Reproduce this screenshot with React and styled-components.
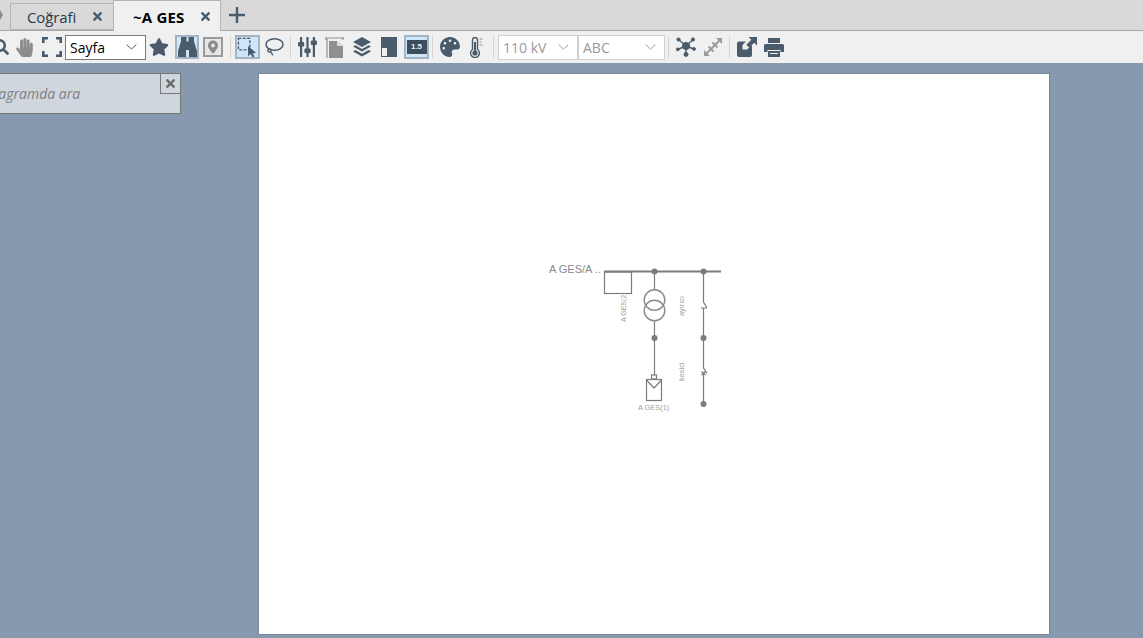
import React from "react";
import styled, { createGlobalStyle } from "styled-components";
import { FaSearch, FaHandPaper, FaStar, FaPalette, FaTimes } from "react-icons/fa";

const Global = createGlobalStyle`
  html, body { margin: 0; padding: 0; height: 100%; overflow: hidden; }
  body { font-family: "Open Sans", "Noto Sans", sans-serif; background: #8799ae; }
  #root { height: 100%; }
`;

const ICON = "#4a5c6c";
const MUTED = "#8d8d8d";

const Shell = styled.div`
  width: 1143px;
  height: 638px;
  display: flex;
  flex-direction: column;
  overflow: hidden;
`;

const TabBar = styled.div`
  box-sizing: border-box;
  height: 31px;
  background: #d9d9d9;
  border-bottom: 1px solid #a9a9a9;
  display: flex;
  align-items: flex-end;
  flex-shrink: 0;
`;

const ScrollArrow = styled.div`
  width: 0;
  height: 0;
  margin: 0 7px 10px 0;
  border-top: 5px solid transparent;
  border-bottom: 5px solid transparent;
  border-left: 3px solid #8a8a8a;
`;

const Tab = styled.div`
  box-sizing: border-box;
  display: flex;
  align-items: center;
  height: ${(p) => (p.$active ? "31px" : "27px")};
  width: ${(p) => (p.$active ? "108px" : "103px")};
  margin-bottom: ${(p) => (p.$active ? "-1px" : "0")};
  padding: ${(p) => (p.$active ? "1px 9px 0 19px" : "0 10px 0 16px")};
  background: ${(p) => (p.$active ? "#f0f0f0" : "#d9d9d9")};
  border: 1px solid #b4b4b4;
  border-bottom: ${(p) => (p.$active ? "none" : "1px solid #b4b4b4")};
  border-right: ${(p) => (p.$active ? "1px solid #b4b4b4" : "none")};
  font-size: 15px;
  font-weight: ${(p) => (p.$active ? 700 : 400)};
  letter-spacing: ${(p) => (p.$active ? "0.2px" : "-0.1px")};
  color: ${(p) => (p.$active ? "#000" : "#2b3a48")};
`;

const TabLabel = styled.span`
  flex: 1;
  white-space: nowrap;
`;

const TabClose = styled(FaTimes)`
  width: 11px;
  height: 13px;
  color: ${ICON};
`;

const AddTab = styled.svg`
  width: 16px;
  height: 16px;
  margin: 0 0 7px 8px;
  stroke: ${ICON};
  stroke-width: 2.4;
  fill: none;
`;

const Toolbar = styled.div`
  height: 32px;
  background: #f0f0f0;
  display: flex;
  align-items: center;
  flex-shrink: 0;
  margin-left: -9px;
`;

const ToolSlot = styled.div`
  box-sizing: border-box;
  width: ${(p) => p.$w || 27}px;
  height: 24px;
  display: flex;
  align-items: center;
  justify-content: center;
  flex-shrink: 0;
  color: ${(p) => (p.$muted ? MUTED : ICON)};
  background: ${(p) => (p.$on ? "#cde6f9" : "transparent")};
  border: ${(p) => (p.$on ? "2px solid #a3b5c5" : "none")};
  margin-left: ${(p) => p.$ml || 0}px;
`;

const Divider = styled.div`
  width: 1px;
  height: 22px;
  background: #d4d4d4;
  flex-shrink: 0;
  margin: 0 ${(p) => p.$r ?? 3}px 0 ${(p) => p.$l ?? 3}px;
`;

const Select = styled.div`
  box-sizing: border-box;
  width: ${(p) => p.$w}px;
  height: 25px;
  flex-shrink: 0;
  display: flex;
  align-items: center;
  justify-content: space-between;
  padding: 0 8px 0 4px;
  background: #fff;
  border: 1px solid ${(p) => (p.$disabled ? "#d0d0d0" : "#7a7a7a")};
  color: ${(p) => (p.$disabled ? "#9a9a9a" : "#000")};
  font-size: 14px;
`;

const Chevron = ({ color = "#555" }) => (
  <svg width="11" height="6" viewBox="0 0 11 6">
    <path d="M.7.7 5.5 5 10.3.7" fill="none" stroke={color} strokeWidth="1" />
  </svg>
);

const ScaleBadge = styled.div`
  width: 20px;
  height: 14px;
  background: #3c4e5e;
  color: #e8eef3;
  font: 700 8px/14px "Liberation Sans", sans-serif;
  text-align: center;
`;

const Canvas = styled.div`
  flex: 1;
  background: #8799ae;
  padding: 10px 0 0 258px;
  position: relative;
  min-height: 0;
`;

const Sheet = styled.div`
  box-sizing: border-box;
  width: 792px;
  height: 562px;
  background: #fff;
  border: 1px solid #77889a;
`;

const DiagramSvg = styled.svg`
  display: block;
  width: 790px;
  height: 560px;
`;

const SearchPanel = styled.div`
  position: absolute;
  left: -24px;
  top: 10px;
  box-sizing: border-box;
  width: 205px;
  height: 41px;
  background: #cfd6de;
  border: 1px solid #777;
  border-left: none;
  display: flex;
  align-items: center;
  padding: 0 0 0 3px;
  color: #7f7f7f;
  font-size: 14px;
  font-style: italic;
`;

const PanelClose = styled.div`
  position: absolute;
  top: 0;
  right: 0;
  box-sizing: border-box;
  width: 20px;
  height: 20px;
  border-left: 1px solid #777;
  border-bottom: 1px solid #777;
  display: flex;
  align-items: center;
  justify-content: center;
  color: #6c6c6c;
`;

const FitIcon = () => (
  <svg width="20" height="20" viewBox="0 0 20 20" fill="none" stroke="currentColor" strokeWidth="2.6">
    <path d="M1.3 6V1.3H6M14 1.3h4.7V6M18.7 14v4.7H14M6 18.7H1.3V14" />
  </svg>
);

const BinocularsIcon = () => (
  <svg width="19" height="20" viewBox="0 0 19 20" fill={ICON}>
    <path d="M3 0h5.500v4.500h2V0H16v4.500l.5 1.500 2.500 8v6h-8v-7H8v7H0v-6l2.500-8L3 4.500Z" />
  </svg>
);

const PinIcon = () => (
  <svg width="20" height="20" viewBox="0 0 20 20">
    <rect x="1" y="1" width="18" height="18" fill="#e6e6e6" stroke="#9a9a9a" strokeWidth="2" />
    <path fillRule="evenodd" fill="#8a8a8a" d="M10 3.6a5 5 0 0 0-5 5c0 3.4 5 8.200 5 8.200s5-4.800 5-8.200a5 5 0 0 0-5-5Zm0 3a2 2 0 1 1 0 4 2 2 0 0 1 0-4Z" />
  </svg>
);

const MarqueeIcon = () => (
  <svg width="21" height="21" viewBox="0 0 22 22">
    <rect x="1.500" y="1.500" width="12" height="12" fill="none" stroke={ICON} strokeWidth="1.400" strokeDasharray="3 1.600" />
    <path d="M11.500 9.500 20 16.500l-3.600.4 1.900 3.600-2 1-1.800-3.700-2.900 2.400Z" fill={ICON} />
  </svg>
);

const LassoIcon = () => (
  <svg width="20" height="20" viewBox="0 0 20 20" fill="none" stroke={ICON} strokeWidth="1.500">
    <ellipse cx="10.500" cy="7.500" rx="8.500" ry="5.800" />
    <circle cx="5.500" cy="13.500" r="1.600" />
    <path d="M6.500 15c1 .8 1.800 1.800 2.200 3.400" />
  </svg>
);

const SlidersIcon = () => (
  <svg width="19" height="20" viewBox="0 0 19 20" fill={ICON}>
    <rect x="2" y="0" width="2.200" height="20" />
    <rect x="8.400" y="0" width="2.200" height="20" />
    <rect x="14.800" y="0" width="2.200" height="20" />
    <rect x="0" y="5" width="6.200" height="4.400" rx="1" />
    <rect x="6.400" y="11.500" width="6.200" height="4.400" rx="1" />
    <rect x="12.800" y="3.500" width="6.200" height="4.400" rx="1" />
  </svg>
);

const PageSizeIcon = () => (
  <svg width="20" height="21" viewBox="0 0 20 21">
    <path d="M1 1h17M1 0v3M18 0v3M2 2v19" stroke="#8f8f8f" strokeWidth="1.200" fill="none" />
    <path d="M4 4h8l6 5v12H4Z" fill="#8f8f8f" />
    <path d="M12 3.500 18 9h-6Z" fill="#dcdcdc" />
  </svg>
);

const LayersIcon = () => (
  <svg width="18" height="20" viewBox="0 0 18 20" fill={ICON}>
    <path d="M9 0 18 5 9 10 0 5Z" />
    <path d="M2.400 8.200 9 11.900l6.600-3.700L18 9.600 9 14.600 0 9.600Z" />
    <path d="M2.400 13 9 16.700 15.600 13l2.400 1.400L9 19.400 0 14.400Z" />
  </svg>
);

const BlockIcon = () => (
  <svg width="16" height="20" viewBox="0 0 16 20">
    <rect width="16" height="20" fill={ICON} />
    <rect x="1" y="11" width="5" height="8" fill="#f0f0f0" />
  </svg>
);

const ThermoIcon = () => (
  <svg width="15" height="21" viewBox="0 0 15 21" fill="none">
    <path d="M3.500 12.500V3a2.500 2.500 0 0 1 5 0v9.500a4.400 4.400 0 1 1-5 0Z" stroke={ICON} strokeWidth="1.400" fill="#f0f0f0" />
    <circle cx="6" cy="16" r="2.600" fill={ICON} />
    <rect x="5" y="5" width="2" height="10" fill={ICON} />
    <path d="M10.500 2h3M10.500 5h2M10.500 8h3" stroke="#8f8f8f" strokeWidth="1" />
  </svg>
);

const NetworkIcon = () => (
  <svg width="20" height="20" viewBox="0 0 20 20" fill={ICON} stroke={ICON}>
    <path d="M10 9 2.500 2.500M10 9l7-6.500M10 9 1.500 12.500M10 9l8 3M10 9v8" strokeWidth="1.400" />
    <circle cx="10" cy="9" r="3.600" />
    <circle cx="2.500" cy="2.500" r="1.600" />
    <circle cx="17" cy="2.500" r="1.600" />
    <circle cx="1.800" cy="12.400" r="1.400" />
    <circle cx="18" cy="12" r="1.400" />
    <circle cx="10" cy="17.400" r="2" />
  </svg>
);

const SpreadIcon = () => (
  <svg width="20" height="20" viewBox="0 0 20 20" fill="#9a9a9a" stroke="#9a9a9a">
    <path d="M2 18 18 2" strokeWidth="1.800" />
    <path d="M13 1h6v6ZM1 13v6h6Z" stroke="none" />
    <path d="M5.500 9.500l5 5M9.500 5.500l5 5" strokeWidth="1.800" />
  </svg>
);

const ExportIcon = () => (
  <svg width="20" height="20" viewBox="0 0 20 20" fill={ICON}>
    <path d="M0 6.500A2 2 0 0 1 2 4.500h7L5.500 8v4.500H10L15 8v10a2 2 0 0 1-2 2H2a2 2 0 0 1-2-2Z" />
    <path d="M11.500 0H20v8.500l-2.800-2.800-5 5-2.900-2.900 5-5Z" />
  </svg>
);

const PrintIcon = () => (
  <svg width="20" height="19" viewBox="0 0 20 19" fill={ICON}>
    <path d="M4 0h12v5H4Z" />
    <path fillRule="evenodd" d="M1.500 6h17A1.500 1.500 0 0 1 20 7.500V14h-3.500v-2h-13v2H0V7.500A1.500 1.500 0 0 1 1.500 6Z" />
    <path fillRule="evenodd" d="M4 13h12v6H4Zm2 2v1h8v-1Z" />
  </svg>
);

const Diagram = () => (
  <DiagramSvg viewBox="259 74 790 560">
    <g stroke="#7c7c7c" fill="none" strokeWidth="1.200">
      <path d="M604 271.500H721" strokeWidth="2" />
      <rect x="604.500" y="272" width="27" height="21.500" />
      <path d="M654.500 271V290M654.500 321V375" />
      <circle cx="654.500" cy="300" r="10.300" strokeWidth="1.400" stroke="#8a8a8a" />
      <circle cx="654.500" cy="310.500" r="10.300" strokeWidth="1.400" stroke="#8a8a8a" />
      <rect x="651.500" y="375" width="5" height="4" />
      <rect x="646.500" y="379.500" width="15" height="21" />
      <path d="M646.500 380 654 388 661.500 380" />
      <path d="M703.500 271V302L707 308M701 308H707M703.500 308V368L707 373.500M701.500 371.500l4 3.500M705.500 371.500l-4 3.500M703.500 373V404" />
    </g>
    <g fill="#7c7c7c">
      <circle cx="654.500" cy="271.500" r="3" />
      <circle cx="703.500" cy="271.500" r="3" />
      <circle cx="654.500" cy="338" r="3" />
      <circle cx="703.500" cy="338" r="3" />
      <circle cx="703.500" cy="404" r="3" />
    </g>
    <g fontFamily="Liberation Sans, sans-serif" fill="#a0a0a0">
      <text x="549" y="273" fontSize="11" fill="#8a8a8a">A GES/A ..</text>
      <text x="638" y="410" fontSize="7.400">A GES(1)</text>
      <text transform="translate(626 322) rotate(-90)" fontSize="7">A GES(2</text>
      <text transform="translate(684 316) rotate(-90)" fontSize="7.400">ayırıcı</text>
      <text transform="translate(684 381) rotate(-90)" fontSize="7.400">kesici</text>
    </g>
  </DiagramSvg>
);

export default function App() {
  return (
    <Shell>
      <Global />
      <TabBar>
        <ScrollArrow />
        <Tab>
          <TabLabel>Coğrafi</TabLabel>
          <TabClose />
        </Tab>
        <Tab $active>
          <TabLabel>~A GES</TabLabel>
          <TabClose />
        </Tab>
        <AddTab viewBox="0 0 16 16">
          <path d="M8 0v16M0 8h16" />
        </AddTab>
      </TabBar>
      <Toolbar>
        <ToolSlot $w={20}>
          <FaSearch size={16} />
        </ToolSlot>
        <ToolSlot $muted>
          <FaHandPaper size={19} />
        </ToolSlot>
        <ToolSlot>
          <FitIcon />
        </ToolSlot>
        <Select $w={81}>
          Sayfa
          <Chevron />
        </Select>
        <ToolSlot $w={26}>
          <FaStar size={20} />
        </ToolSlot>
        <ToolSlot $w={24} $ml={3} $on>
          <BinocularsIcon />
        </ToolSlot>
        <ToolSlot $w={20} $ml={4}>
          <PinIcon />
        </ToolSlot>
        <Divider $l={7} $r={4} />
        <ToolSlot $w={25} $on>
          <MarqueeIcon />
        </ToolSlot>
        <ToolSlot>
          <LassoIcon />
        </ToolSlot>
        <Divider />
        <ToolSlot>
          <SlidersIcon />
        </ToolSlot>
        <ToolSlot>
          <PageSizeIcon />
        </ToolSlot>
        <ToolSlot>
          <LayersIcon />
        </ToolSlot>
        <ToolSlot>
          <BlockIcon />
        </ToolSlot>
        <ToolSlot $w={25} $ml={2} $on>
          <ScaleBadge>1.5</ScaleBadge>
        </ToolSlot>
        <Divider />
        <ToolSlot>
          <FaPalette size={20} />
        </ToolSlot>
        <ToolSlot>
          <ThermoIcon />
        </ToolSlot>
        <Divider $r={4} />
        <Select $w={80} $disabled>
          110 kV
          <Chevron color="#a0a0a0" />
        </Select>
        <Select $w={87} $disabled>
          ABC
          <Chevron color="#a0a0a0" />
        </Select>
        <Divider />
        <ToolSlot>
          <NetworkIcon />
        </ToolSlot>
        <ToolSlot>
          <SpreadIcon />
        </ToolSlot>
        <Divider />
        <ToolSlot>
          <ExportIcon />
        </ToolSlot>
        <ToolSlot>
          <PrintIcon />
        </ToolSlot>
      </Toolbar>
      <Canvas>
        <Sheet>
          <Diagram />
        </Sheet>
        <SearchPanel>
          Diyagramda ara
          <PanelClose>
            <FaTimes size={13} />
          </PanelClose>
        </SearchPanel>
      </Canvas>
    </Shell>
  );
}
